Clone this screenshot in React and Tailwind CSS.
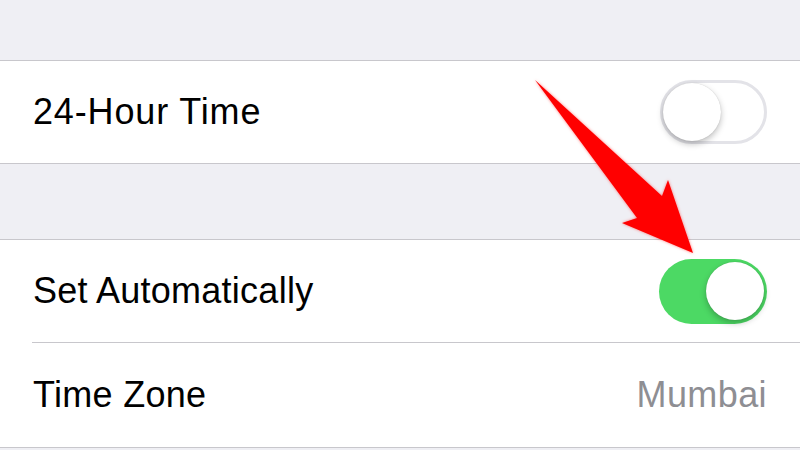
export default function App() {
  const font = { fontFamily: '"Liberation Sans", Arial, sans-serif' };
  return (
    <div className="relative w-[800px] h-[450px] overflow-hidden bg-[#efeff4]" style={font}>
      <div className="h-[61px] border-b border-[#c8c7cc]" />
      <div className="h-[103px] bg-white flex items-center justify-between pl-[33px] pr-[33px] border-b border-[#c8c7cc]">
        <span className="text-[36px] text-black tracking-[0.85px]">24-Hour Time</span>
        <div className="relative w-[107px] h-[64px] rounded-full border-[3px] border-[#e3e3e8] bg-white">
          <div className="absolute left-0 top-0 w-[58px] h-[58px] rounded-full bg-white shadow-[0_3px_6px_rgba(0,0,0,0.25),0_0_1px_rgba(0,0,0,0.2)]" />
        </div>
      </div>
      <div className="h-[76px] border-b border-[#c8c7cc]" />
      <div className="bg-white">
        <div className="h-[102px] flex items-center justify-between pl-[33px] pr-[33px]">
          <span className="text-[36px] text-black tracking-[0.25px]">Set Automatically</span>
          <div className="relative w-[108px] h-[65px] rounded-full bg-[#4cd964]">
            <div className="absolute right-[3px] top-[3px] w-[58px] h-[58px] rounded-full bg-white shadow-[0_3px_6px_rgba(0,0,0,0.25),0_0_1px_rgba(0,0,0,0.2)]" />
          </div>
        </div>
        <div className="ml-[32px] h-px bg-[#c8c7cc]" />
        <div className="h-[105px] flex items-center justify-between pl-[33px] pr-[33px] border-b border-[#c8c7cc]">
          <span className="text-[36px] text-black tracking-[0.3px]">Time Zone</span>
          <span className="text-[36px] text-[#8e8e93] tracking-[0.4px]">Mumbai</span>
        </div>
      </div>
      <svg className="absolute left-0 top-0" width="800" height="450" viewBox="0 0 800 450">
        <defs>
          <filter id="glow" x="-20%" y="-20%" width="140%" height="140%">
            <feDropShadow dx="0" dy="0" stdDeviation="1.5" floodColor="#ff0000" floodOpacity="0.5" />
          </filter>
        </defs>
        <polygon
          points="535,80 662,196 668,180 693,253 622,223 637,218"
          fill="#ff0000"
          filter="url(#glow)"
        />
      </svg>
    </div>
  );
}
